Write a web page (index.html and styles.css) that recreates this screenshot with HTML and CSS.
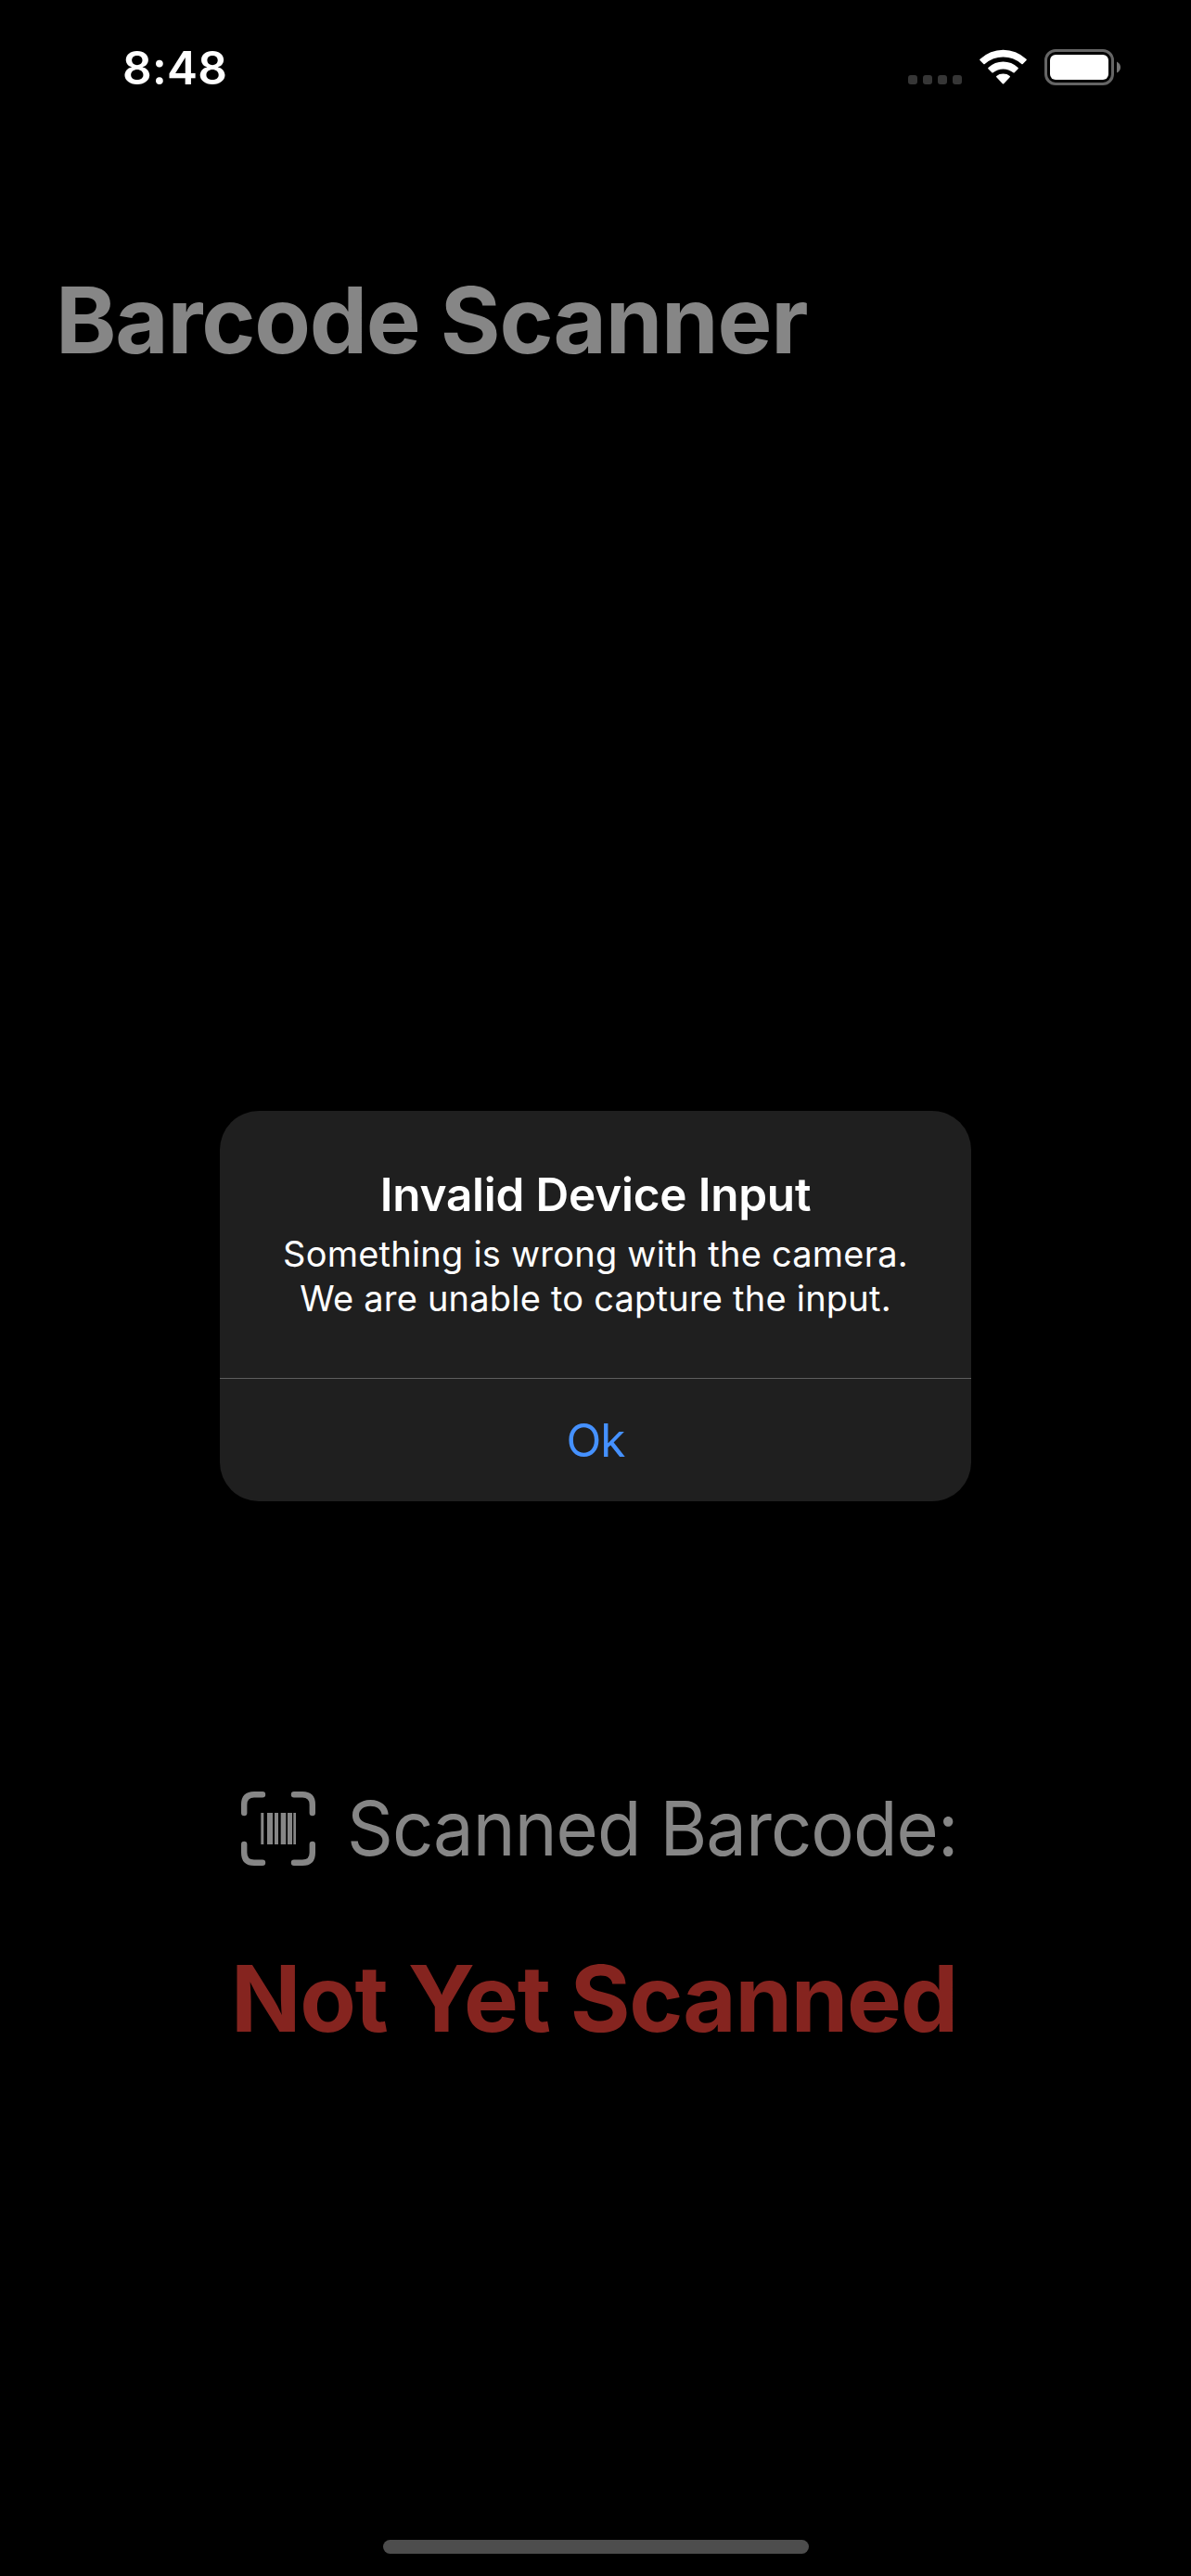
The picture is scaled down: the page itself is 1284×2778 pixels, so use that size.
FILE: index.html
```html
<!DOCTYPE html>
<html lang="en">
<head>
<meta charset="utf-8">
<title>Barcode Scanner</title>
<link rel="stylesheet" href="styles.css">
</head>
<body>
<main class="screen">
  <header class="status-bar">
    <span class="time">8:48</span>
    <svg class="status-icons" width="230" height="40" viewBox="0 0 230 40">
      <g fill="#363636">
        <rect x="0" y="28" width="10" height="10" rx="3"/>
        <rect x="16" y="28" width="10" height="10" rx="3"/>
        <rect x="32" y="28" width="10" height="10" rx="3"/>
        <rect x="48" y="28" width="10" height="10" rx="3"/>
      </g>
      <g fill="#fff">
        <path d="M77.5 10.8Q88.500 .8 102.500 .8Q116.500 .8 127.500 10.800Q128.200 11.400 127.600 12L123.700 16Q123 16.600 122.300 16Q113.500 8.600 102.500 8.600Q91.500 8.600 82.700 16Q82 16.600 81.300 16L77.400 12Q76.800 11.400 77.500 10.800Z"/>
        <path d="M86.400 20Q93.500 13.600 102.500 13.600Q111.500 13.600 118.600 20Q119.200 20.600 118.600 21.200L114.700 25.200Q114 25.800 113.300 25.200Q108.500 21.400 102.500 21.400Q96.500 21.400 91.700 25.200Q91 25.800 90.300 25.200L86.400 21.200Q85.800 20.600 86.400 20Z"/>
        <path d="M95.300 29Q98.200 26.600 102.500 26.600Q106.800 26.600 109.700 29Q110.300 29.600 109.700 30.200L103.200 37.200Q102.500 37.800 101.800 37.200L95.300 30.200Q94.700 29.600 95.300 29Z"/>
        <rect x="153" y="6" width="63" height="27" rx="6"/>
      </g>
      <rect x="148.500" y="1.500" width="72" height="36" rx="10.500" fill="none" stroke="#656565" stroke-width="3"/>
      <path d="M225 13.500Q229 15.500 229 19.500Q229 23.500 225 25.500Z" fill="#757575"/>
    </svg>
  </header>

  <h1 class="page-title">Barcode Scanner</h1>

  <section class="result">
    <div class="result-label">
      <svg width="80" height="80" viewBox="0 0 80 80">
        <path d="M3.200 23V14Q3.200 3.200 14 3.200H23M57 3.200H66Q76.800 3.200 76.800 14V23M76.800 57V66Q76.800 76.800 66 76.800H57M23 76.800H14Q3.200 76.800 3.200 66V57" fill="none" stroke="#868686" stroke-width="6.400" stroke-linecap="round"/>
        <path d="M21.300 23h3v34h-3zM28 23h6v34h-6zM36 23h4v34h-4zM42.700 23h5.600v34h-5.600zM50 23h5v34h-5zM56.300 23h2.700v34h-2.700z" fill="#868686"/>
      </svg>
      <span class="result-text">Scanned Barcode:</span>
    </div>
    <p class="result-value">Not Yet Scanned</p>
  </section>

  <div class="home-indicator"></div>

  <div class="alert" role="alertdialog">
    <div class="alert-body">
      <h2 class="alert-title">Invalid Device Input</h2>
      <p class="alert-message">Something is wrong with the camera.<br>We are unable to capture the input.</p>
    </div>
    <button class="alert-button">Ok</button>
  </div>
</main>
</body>
</html>
```
FILE: styles.css
```css
* {
  box-sizing: border-box;
}

body {
  margin: 0;
  background: #000;
  font-family: Inter, "Liberation Sans", sans-serif;
}

h1, h2, p {
  margin: 0;
}

svg {
  display: block;
  flex: none;
}

.screen {
  position: relative;
  display: flex;
  flex-direction: column;
  width: 1284px;
  height: 2778px;
  padding-bottom: 24px;
  background: #000;
  overflow: hidden;
  white-space: nowrap;
}

.status-bar {
  display: flex;
  align-items: center;
  justify-content: space-between;
  height: 146px;
  padding: 0 75px 0 132px;
}

.time {
  color: #fff;
  font-size: 49.5px;
  font-weight: 600;
  letter-spacing: 0.3px;
}

.page-title {
  margin: 139px 0 0 60px;
  color: #868686;
  font-size: 99px;
  font-weight: 700;
  line-height: 120px;
  letter-spacing: -1.23px;
}

.result {
  margin-top: 1517px;
}

.result-label {
  display: flex;
  align-items: center;
  gap: 34px;
  height: 100px;
  padding-left: 260px;
}

.result-text {
  color: #868686;
  font-size: 81.5px;
  line-height: 100px;
  letter-spacing: -1px;
  transform: scaleX(0.953);
  transform-origin: left;
}

.result-value {
  margin: 73px 0 0 249px;
  color: #85241f;
  font-size: 99px;
  font-weight: 700;
  line-height: 120px;
  letter-spacing: -1.29px;
}

.home-indicator {
  width: 459px;
  height: 15px;
  margin: auto auto 0;
  border-radius: 8px;
  background: #4d4d4d;
}

.alert {
  position: absolute;
  top: 1198px;
  left: 237px;
  width: 810px;
  border-radius: 42px;
  background: #1f1f1f;
  overflow: hidden;
  text-align: center;
}

.alert-body {
  padding: 60px 0 62px;
  color: #fff;
}

.alert-title {
  font-size: 49.5px;
  font-weight: 600;
  line-height: 60px;
  letter-spacing: -0.22px;
}

.alert-message {
  margin-top: 10px;
  font-size: 38px;
  line-height: 48px;
  letter-spacing: 0.22px;
}

.alert-button {
  display: block;
  width: 100%;
  height: 133px;
  padding: 0;
  border: 0;
  border-top: 1px solid #5e5e5e;
  background: none;
  color: #4591ff;
  font-family: inherit;
  font-size: 49.5px;
  letter-spacing: -1px;
}
```
